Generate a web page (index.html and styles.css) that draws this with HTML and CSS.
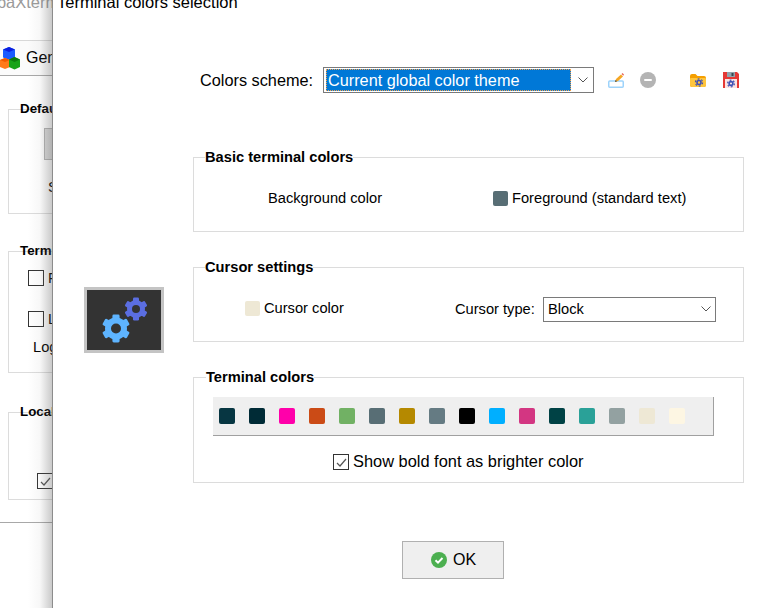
FILE: index.html
```html
<!DOCTYPE html>
<html lang="en">
<head>
<meta charset="utf-8">
<title>Terminal colors selection</title>
<link rel="stylesheet" href="styles.css">
</head>
<body>
<div class="behind">
  <div class="behind-title">MobaXterm</div>
  <div class="behind-tabs">
    <svg class="cubes" width="21" height="23" viewBox="0 0 21 23">
      <path fill="#1a5cff" d="M3 2.500L9 0l6 2.500v8L9 13l-6-2.500z"/>
      <path fill="#0a1fe0" d="M3 2.500L9 5l6-2.500L9 0z"/>
      <path fill="#ff7a1a" d="M0 13l5-2 5 2v7l-5 2-5-2z"/>
      <path fill="#f15a00" d="M0 13l5 2 5-2-5-2z"/>
      <path fill="#17a317" d="M9 12.500l5.500-2.500 5.500 2.500V20l-5.500 2.500L9 20z"/>
      <path fill="#0c7d0c" d="M9 12.500l5.500 2.500 5.500-2.500-5.500-2.500z"/>
    </svg>
    <span class="behind-tab-label">General</span>
  </div>
  <div class="behind-group behind-default">
    <div class="behind-legend">Default</div>
    <div class="behind-button"></div>
    <div class="behind-text behind-s">Style</div>
  </div>
  <div class="behind-group behind-term">
    <div class="behind-legend">Terminal</div>
    <div class="behind-row first"><span class="box"></span><span class="behind-text">Font</span></div>
    <div class="behind-row"><span class="box"></span><span class="behind-text">Log</span></div>
    <div class="behind-text behind-log">Log</div>
  </div>
  <div class="behind-group behind-local">
    <div class="behind-legend">Local</div>
    <div class="behind-row local-row"><span class="box checked">
      <svg width="13" height="13" viewBox="0 0 13 13"><path d="M2 7l3 3 6-7" fill="none" stroke="#555" stroke-width="1.2"/></svg>
    </span></div>
  </div>
  <div class="behind-rule"></div>
</div>

<div class="dialog">
  <div class="dialog-title">Terminal colors selection</div>
  <div class="dialog-body">
    <aside class="side">
      <div class="side-icon">
        <svg width="74" height="60" viewBox="0 0 74 60">
          <g transform="translate(49 19)" fill="#5b6ee1">
            <circle r="9"/>
            <rect x="-3" y="-11.500" width="6" height="23" rx="1.200"/>
            <rect x="-3" y="-11.500" width="6" height="23" rx="1.200" transform="rotate(60)"/>
            <rect x="-3" y="-11.500" width="6" height="23" rx="1.200" transform="rotate(120)"/>
            <circle r="4" fill="#333"/>
          </g>
          <g transform="translate(29 38.500)" fill="#5eb4ff">
            <circle r="11"/>
            <rect x="-3.600" y="-14" width="7.200" height="28" rx="1.400"/>
            <rect x="-3.600" y="-14" width="7.200" height="28" rx="1.400" transform="rotate(60)"/>
            <rect x="-3.600" y="-14" width="7.200" height="28" rx="1.400" transform="rotate(120)"/>
            <circle r="5" fill="#333"/>
          </g>
        </svg>
      </div>
    </aside>
    <main class="main">
      <div class="scheme-row">
        <span class="scheme-label">Colors scheme:</span>
        <div class="combo scheme-combo">
          <span class="combo-value">Current global color theme</span>
          <svg class="chev" width="10" height="6" viewBox="0 0 10 6"><path d="M.5.500L5 5 9.500.500" fill="none" stroke="#555" stroke-width="1"/></svg>
        </div>
        <svg class="tool tool-edit" width="16" height="15" viewBox="0 0 16 15">
          <rect x=".75" y="8" width="14.500" height="6.250" rx="1" fill="#fff" stroke="#9dd3fb" stroke-width="1.500"/>
          <path d="M7 9l1-3 5-4.500 2 2L10 8z" fill="#f5a623"/>
          <path d="M7 9l.6-2 1.500 1.300z" fill="#444"/>
          <path d="M13.500 1l1-1L16 1.500l-.8 1.200z" fill="#e8675a"/>
        </svg>
        <svg class="tool tool-minus" width="16" height="16" viewBox="0 0 16 16">
          <circle cx="8" cy="8" r="8" fill="#b4b4b4"/>
          <rect x="4" y="7" width="8" height="2" rx="1" fill="#fff"/>
        </svg>
        <svg class="tool tool-folder" width="16" height="13" viewBox="0 0 16 13">
          <path d="M0 2q0-2 2-2h3.500l2 2H14q2 0 2 2v7q0 2-2 2H2q-2 0-2-2z" fill="#f59f00"/>
          <path d="M1 4h14q1 0 1 1v6q0 2-2 2H2q-2 0-2-2V5q0-1 1-1z" fill="#ffc53d"/>
          <circle cx="9" cy="8.500" r="3.600" fill="none" stroke="#3f51b5" stroke-width="1.200" stroke-dasharray="1.900 1.870"/>
          <circle cx="9" cy="8.500" r="2" fill="none" stroke="#3f51b5" stroke-width="1.600"/>
        </svg>
        <svg class="tool tool-save" width="16" height="16" viewBox="0 0 16 16">
          <path d="M0 0h14l2 2v14H0z" fill="#e53935"/>
          <rect x="4" y="0" width="8" height="5" fill="#90a4ae"/>
          <rect x="8.500" y="1" width="2" height="3" fill="#37474f"/>
          <rect x="2" y="7" width="12" height="9" fill="#fbe3e3"/>
          <circle cx="8" cy="11.500" r="3.400" fill="none" stroke="#3f51b5" stroke-width="1.200" stroke-dasharray="1.800 1.760"/>
          <circle cx="8" cy="11.500" r="1.900" fill="none" stroke="#3f51b5" stroke-width="1.600"/>
        </svg>
      </div>

      <fieldset class="group group-basic">
        <legend>Basic terminal colors</legend>
        <div class="basic-row">
          <span class="bg-label">Background color</span>
          <span class="swatch-label"><span class="swatch sw-fg"></span>Foreground (standard text)</span>
        </div>
      </fieldset>

      <fieldset class="group group-cursor">
        <legend>Cursor settings</legend>
        <div class="cursor-row">
          <span class="swatch-label cursor-color"><span class="swatch sw-cursor"></span>Cursor color</span>
          <span class="cursor-type">Cursor type:</span>
          <div class="combo type-combo">
            <span>Block</span>
            <svg class="chev" width="10" height="6" viewBox="0 0 10 6"><path d="M.5.500L5 5 9.500.500" fill="none" stroke="#555" stroke-width="1"/></svg>
          </div>
        </div>
      </fieldset>

      <fieldset class="group group-term">
        <legend>Terminal colors</legend>
        <div class="palette">
          <span class="chip c1"></span><span class="chip c2"></span><span class="chip c3"></span><span class="chip c4"></span>
          <span class="chip c5"></span><span class="chip c6"></span><span class="chip c7"></span><span class="chip c8"></span>
          <span class="chip c9"></span><span class="chip c10"></span><span class="chip c11"></span><span class="chip c12"></span>
          <span class="chip c13"></span><span class="chip c14"></span><span class="chip c15"></span><span class="chip c16"></span>
        </div>
        <label class="bold-row">
          <span class="box checked">
            <svg width="13" height="13" viewBox="0 0 13 13"><path d="M2 7l3 3 6-7" fill="none" stroke="#555" stroke-width="1.200"/></svg>
          </span><span class="bold-text">Show bold font as brighter color</span>
        </label>
      </fieldset>

      <div class="ok-row">
        <button class="ok" type="button">
          <svg width="16" height="16" viewBox="0 0 16 16">
            <circle cx="8" cy="8" r="8" fill="#4caf50"/>
            <path d="M4.500 8.200l2.500 2.400 4.500-4.600" fill="none" stroke="#fff" stroke-width="2"/>
          </svg>
          OK
        </button>
      </div>
    </main>
  </div>
</div>
</body>
</html>
```
FILE: styles.css
```css
* { box-sizing: border-box; }
html, body { margin: 0; height: 100%; overflow: hidden; }
body {
  display: flex;
  width: 759px;
  height: 608px;
  background: #fff;
  color: #000;
  font-family: "Liberation Sans", Arial, sans-serif;
  font-size: 14.67px;
}

/* Window behind the dialog */
.behind {
  position: relative;
  width: 52px;
  flex: none;
  overflow: hidden;
  background: #fff;
}
.behind::after {
  content: "";
  position: absolute;
  inset: 0 0 0 auto;
  width: 24px;
  background: linear-gradient(to right, rgba(120,120,120,0), rgba(120,120,120,.06) 50%, rgba(90,90,90,.32));
}
.behind-title {
  margin: -6px 0 0 -26px;
  color: #9a9a9a;
  font-size: 16.5px;
  white-space: nowrap;
  height: 46px;
  line-height: 17px;
}
.behind-tabs {
  display: flex;
  align-items: center;
  height: 36px;
  width: 100%;
  gap: 5px;
  background: #fbfbfb;
  border-top: 1px solid #d8d8d8;
  border-bottom: 1px solid #a8a8a8;
  font-size: 16px;
  white-space: nowrap;
}
.cubes { flex: none; margin-top: 1px; }
.behind-group {
  position: relative;
  width: 200px;
  margin-left: 8px;
  border: 1px solid #dcdcdc;
}
.behind-legend {
  position: absolute;
  left: 11px;
  top: -9px;
  font-weight: 700;
  font-size: 13.33px;
  line-height: 16px;
  white-space: nowrap;
}
.behind-default { height: 105px; margin-top: 33px; }
.behind-button {
  position: absolute;
  left: 35px;
  top: 18px;
  width: 40px;
  height: 32px;
  background: #dcdcdc;
  border: 1px solid #b4b4b4;
}
.behind-text { white-space: nowrap; line-height: 17px; }
.behind-s { position: absolute; left: 39px; top: 69px; }
.behind-term { height: 122px; margin-top: 37px; }
.behind-row { display: flex; align-items: center; gap: 4px; margin-left: 19px; height: 16px; margin-top: 25px; }
.behind-row.first { margin-top: 18px; }
.behind-log { margin: 12px 0 0 24px; }
.behind-local { height: 88px; margin-top: 39px; }
.behind-row.local-row { margin: 60px 0 0 28px; }
.behind-rule { margin-top: 22px; height: 1px; background: #a8a8a8; }

.box {
  display: inline-flex;
  align-items: center;
  justify-content: center;
  width: 16px;
  height: 16px;
  flex: none;
  border: 1px solid #333;
  background: #fff;
}

/* Dialog */
.dialog {
  flex: 1;
  min-width: 0;
  display: flex;
  flex-direction: column;
  background: #fff;
  border-left: 1px solid #8c8c8c;
}
.dialog-title {
  height: 10px;
  margin: -6px 0 0 4px;
  line-height: 17px;
  font-size: 16.5px;
  white-space: nowrap;
}
.dialog-body { display: flex; flex: 1; min-height: 0; }
.side {
  width: 140px;
  flex: none;
  padding: 283px 0 0 31px;
}
.side-icon {
  width: 80px;
  height: 66px;
  background: #333;
  border: 3px solid #c4c4c4;
  display: flex;
  align-items: center;
  justify-content: center;
}
.main { width: 551px; flex: none; }

.scheme-row {
  display: flex;
  align-items: center;
  height: 26px;
  margin-top: 63px;
  padding-left: 7px;
}
.scheme-label { font-size: 16.3px; width: 123px; flex: none; padding-top: 1px; }
.combo {
  display: flex;
  align-items: center;
  justify-content: space-between;
  background: #fff;
  border: 1px solid #7a7a7a;
  flex: none;
}
.scheme-combo { width: 271px; height: 26px; padding: 1px 17px 1px 2px; font-size: 16.25px; }
.combo-value {
  width: 245px;
  height: 22px;
  line-height: 20px;
  padding-left: 1px;
  background: #0078d7;
  color: #fff;
  border: 1px dotted #f5a04a;
  white-space: nowrap;
}
.scheme-combo .chev { margin-right: -12px; }
.tool { flex: none; }
.tool-edit { margin-left: 14px; }
.tool-minus { margin-left: 16px; }
.tool-folder { margin-left: 34px; }
.tool-save { margin-left: 17px; }

.group {
  margin: 0;
  padding: 0;
  min-width: 0;
  border: 1px solid #dcdcdc;
}
.group legend {
  margin-left: 11px;
  padding: 0;
  font-weight: 700;
  font-size: 14.67px;
  line-height: 18px;
  height: 18px;
}
.group-basic { height: 84px; margin-top: 55px; }
.group-cursor { height: 84px; margin-top: 26px; }
.group-term { height: 115px; margin-top: 26px; }
.group-term legend { margin-left: 12px; }

.basic-row { display: flex; align-items: center; height: 18px; margin-top: 23px; }
.bg-label { margin-left: 74px; width: 225px; flex: none; }
.swatch-label { display: inline-flex; align-items: center; gap: 4px; white-space: nowrap; }
.swatch { width: 15px; height: 15px; border-radius: 2px; flex: none; }
.sw-fg { background: #586e75; }
.sw-cursor { background: #eee8d5; }
.cursor-row { display: flex; align-items: flex-start; height: 25px; margin-top: 21px; }
.cursor-color { margin: 3px 0 0 51px; width: 210px; flex: none; }
.cursor-type { width: 88px; flex: none; margin-top: 4px; }
.type-combo { width: 173px; height: 25px; padding: 0 4px 2px 4px; }

.palette {
  display: flex;
  align-items: center;
  gap: 14px;
  width: 501px;
  height: 39px;
  margin: 11px 0 0 19px;
  padding-left: 6px;
  background: #efefef;
  border-right: 1px solid #a0a0a0;
  border-bottom: 1px solid #a0a0a0;
}
.chip { width: 16px; height: 16px; border-radius: 2px; flex: none; }
.c1 { background: #073642; }
.c2 { background: #002b36; }
.c3 { background: #ff00aa; }
.c4 { background: #cb4b16; }
.c5 { background: #71b164; }
.c6 { background: #586e75; }
.c7 { background: #b58900; }
.c8 { background: #657b83; }
.c9 { background: #000000; }
.c10 { background: #00afff; }
.c11 { background: #d33682; }
.c12 { background: #004245; }
.c13 { background: #2aa198; }
.c14 { background: #93a1a1; }
.c15 { background: #eee8d5; }
.c16 { background: #fdf6e3; }
.bold-row {
  display: flex;
  align-items: flex-start;
  gap: 4px;
  margin: 18px 0 0 139px;
  font-size: 16.4px;
  line-height: 16px;
  white-space: nowrap;
}
.bold-text { margin-top: -1px; }

.ok-row { display: flex; margin-top: 58px; padding-left: 209px; }
.ok {
  display: flex;
  align-items: center;
  justify-content: center;
  gap: 6px;
  width: 102px;
  height: 38px;
  padding: 0 0 0 1px;
  background: #efefef;
  border: 1px solid #b0b0b0;
  font: inherit;
  font-size: 16px;
  color: #000;
}
```
